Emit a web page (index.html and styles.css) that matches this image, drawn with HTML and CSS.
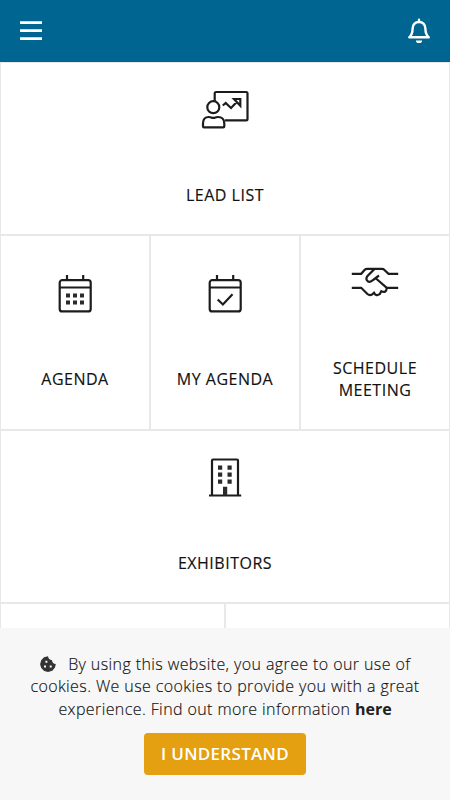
FILE: index.html
```html
<!DOCTYPE html>
<html lang="en">
<head>
  <meta charset="utf-8">
  <meta name="viewport" content="width=device-width, initial-scale=1">
  <title>Home</title>
  <link rel="stylesheet" href="styles.css">
</head>
<body>
  <header class="navbar">
    <button class="nav-btn" aria-label="Menu">
      <svg width="24" height="24" viewBox="0 0 24 24" fill="#fff">
        <path d="M1 2.300h22v2.700H1zM1 10.300h22v2.700H1zM1 18.300h22V21H1z"/>
      </svg>
    </button>
    <button class="nav-btn" aria-label="Notifications">
      <svg width="24" height="26" viewBox="0 0 24 26" fill="none" stroke="#fff" stroke-width="2.400" stroke-linejoin="round" stroke-linecap="round">
        <path d="M12 1.800V4M12 4C8 4 5.600 6.800 5.600 10.400C5.600 15.400 4.600 17.300 2.200 19.300H21.800C19.400 17.300 18.400 15.400 18.400 10.400C18.400 6.800 16 4 12 4Z"/>
        <path d="M8.900 22.400h6.200a3.100 2.700 0 0 1-6.200 0z" fill="#fff" stroke="none"/>
      </svg>
    </button>
  </header>

  <main>
    <div class="row">
      <a class="tile">
        <svg class="icon" viewBox="0 0 50 40">
          <path d="M14.700 12V3.400Q14.700 2 16.100 2H46.100Q47.500 2 47.500 3.400V29Q47.500 30.400 46.100 30.400H25"/>
          <circle cx="13.300" cy="17.200" r="6"/>
          <path d="M3 36.300V33.500Q3 27 8.800 27Q10.500 27 11.500 27.600Q13.300 28.200 15.100 27.600Q16.100 27 17.800 27Q24.300 27 24.300 33.500V36.300Q24.300 37.400 23.200 37.400H4Q3 37.400 3 36.300Z"/>
          <path d="M22.800 15.500L25.700 13L31 18L37.500 11.200M34 9H40.300V15.700Z"/>
        </svg>
        <span class="label">Lead List</span>
      </a>
    </div>

    <div class="row">
      <a class="tile">
        <svg class="icon" viewBox="0 0 50 40">
          <rect x="9.700" y="6.200" width="31" height="31.200" rx="2.500"/>
          <path d="M10 13.500h30.500M17 1v5M33.200 1v5"/>
          <path class="solid" d="M16 19.500h4v4h-4zM23 19.500h4v4h-4zM30 19.500h4v4h-4zM16 26.500h4v4h-4zM23 26.500h4v4h-4zM30 26.500h4v4h-4z"/>
        </svg>
        <span class="label">Agenda</span>
      </a>
      <a class="tile">
        <svg class="icon" viewBox="0 0 50 40">
          <rect x="9.700" y="6.200" width="31" height="31.200" rx="2.500"/>
          <path d="M10 13.500h30.500M17 1v5M33.200 1v5"/>
          <path d="M17.700 25.500l5.200 5L32.500 20.300"/>
        </svg>
        <span class="label">My Agenda</span>
      </a>
      <a class="tile">
        <svg class="icon" viewBox="0 0 50 40">
          <path d="M1.800 10.800H11.200L14.500 7Q15.500 5.900 17.300 5.900H32Q33.500 5.900 34.500 7L38.500 10.800H48.200"/>
          <path d="M24.500 6L17.500 13Q15.200 16.200 17.700 18.200Q20.300 19.800 23 17L29 12.500M26 15.500L36.800 24.800H48.200"/>
          <path d="M1.800 24.800H11.200L17.400 31Q19.500 32.800 22 31.600L24 29.700Q26 33.700 29.700 31.200L31.300 28.200Q36.500 30.500 36.800 24.800"/>
        </svg>
        <span class="label">Schedule Meeting</span>
      </a>
    </div>

    <div class="row">
      <a class="tile">
        <svg class="icon" viewBox="0 0 50 40">
          <path d="M12 37.500V2.500Q12 1.500 13 1.500H37Q38 1.500 38 2.500V37.500M9 37.500H41.200"/>
          <path class="solid" d="M18 7.500h4.200v4.200H18zM27.500 7.500h4.200v4.200h-4.200zM18 14.500h4.200v4.200H18zM27.500 14.500h4.200v4.200h-4.200zM18 21.500h4.200v4.200H18zM27.500 21.500h4.200v4.200h-4.200zM23 28.700h4.200v8.500H23z"/>
        </svg>
        <span class="label">Exhibitors</span>
      </a>
    </div>

    <div class="row">
      <a class="tile"></a>
      <a class="tile"></a>
    </div>
  </main>

  <div class="cookie-bar">
    <p class="cookie-text">
      <svg class="cookie" width="16" height="16" viewBox="0 0 16 16">
        <path fill="#333" d="M8 .3C8.200 2.700 9.700 4 12 4.200C12.200 6.500 13.500 7.900 15.800 8.100L15 11.500L12.300 14.700L8 16L4.200 15L1.200 12L.1 8.300L1.200 4.200L4 1.300Z"/>
        <path fill="#f7f7f7" d="M5.400 4.700h2v2h-2zM4 9.400h2v2H4zM9.700 9.400h2v2h-2z"/>
      </svg>
      By using this website, you agree to our use of cookies. We use cookies to provide you with a great experience. Find out more information <a class="more" href="#">here</a>
    </p>
    <button class="accept-btn">I UNDERSTAND</button>
  </div>
</body>
</html>
```
FILE: styles.css
```css
* {
  box-sizing: border-box;
}

body {
  margin: 0;
  height: 100vh;
  overflow: hidden;
  font-family: "Open Sans", sans-serif;
  font-size: 16px;
  line-height: 22.4px;
  letter-spacing: 0.4px;
  color: #111;
  background: #fff;
}

.navbar {
  display: flex;
  justify-content: space-between;
  align-items: center;
  height: 62px;
  padding: 0 19px;
  background: #006591;
}

.nav-btn {
  display: flex;
  padding: 0;
  border: none;
  background: none;
}

.row {
  display: flex;
}

.tile {
  flex: 1 1 0;
  display: flex;
  flex-direction: column;
  align-items: center;
  justify-content: center;
  gap: 53.6px;
  min-height: 173px;
  padding: 27px 20px 28px;
  border: 1px solid #e8e8e8;
  text-align: center;
}

.icon {
  width: 50px;
  height: 40px;
  fill: none;
  stroke: #1c1c1c;
  stroke-width: 2.2;
}

.icon .solid {
  fill: #2b2b2b;
  stroke: none;
}

.label {
  font-weight: 500;
  letter-spacing: 0.5px;
  text-transform: uppercase;
  -webkit-text-stroke: 0.15px #111;
}

.cookie-bar {
  position: fixed;
  left: 0;
  right: 0;
  bottom: 0;
  height: 172px;
  padding: 25px 25px 0;
  text-align: center;
  background: #f7f7f7;
}

.cookie-text {
  margin: 0 0 12.5px;
  font-weight: 300;
  -webkit-text-stroke: 0.15px #111;
}

.cookie {
  margin-right: 8px;
  vertical-align: -2px;
}

.more {
  font-weight: 700;
  letter-spacing: 0;
  color: #222;
  text-decoration: none;
  -webkit-text-stroke: 0;
}

.accept-btn {
  height: 42px;
  padding: 0 17px;
  border: none;
  border-radius: 4px;
  font-family: inherit;
  font-size: 17px;
  font-weight: 600;
  letter-spacing: 0.3px;
  color: #fff;
  background: #e4a010;
}
```
